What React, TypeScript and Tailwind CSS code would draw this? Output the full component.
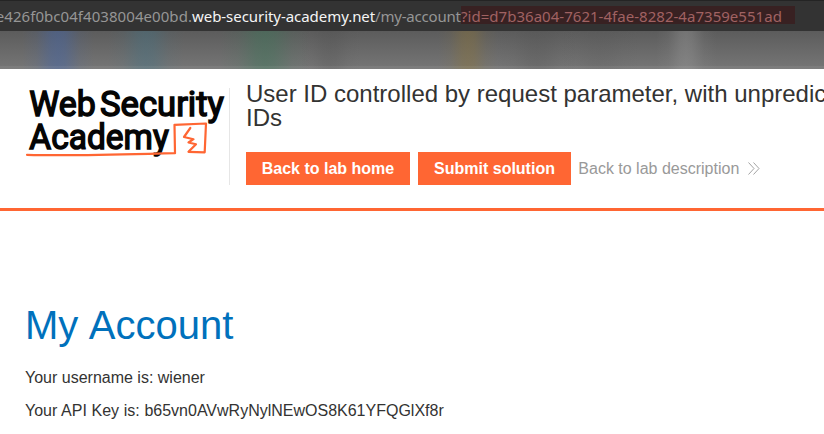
function AddressBar() {
  return (
    <div className="flex h-[31px] w-full items-start border-t border-[#242424] bg-[#333333] pt-[5px] font-['Noto_Sans',sans-serif] text-[15px] leading-[18px] whitespace-nowrap">
      <span className="flex h-5 w-48 shrink-0 justify-end pt-px tracking-[0.06px] text-[#969696]">e426f0bc04f4038004e00bd.</span>
      <span className="h-5 w-[183px] shrink-0 pt-px tracking-[-0.05px] text-[#f5f5f5]">web-security-academy.net</span>
      <span className="h-5 w-[86px] shrink-0 pt-px tracking-[-0.2px] text-[#969696]">/my-account</span>
      <span className="h-[18px] w-[334px] shrink-0 bg-[#382122] pt-px tracking-[0.03px] text-[#a06262]">?id=d7b36a04-7621-4fae-8282-4a7359e551ad</span>
    </div>
  );
}

const glows = [
  { id: "blue", x: 22, width: 72, color: "#4565a4", strength: 0.5 },
  { id: "teal", x: 108, width: 76, color: "#437386", strength: 0.4 },
  { id: "green", x: 220, width: 90, color: "#3d7659", strength: 0.45 },
  { id: "shade-a", x: 300, width: 60, color: "#484848", strength: 0.2 },
  { id: "amber", x: 438, width: 60, color: "#8c743a", strength: 0.42 },
  { id: "shade-b", x: 497, width: 80, color: "#505050", strength: 0.25 },
  { id: "shade-c", x: 560, width: 80, color: "#505050", strength: 0.15 },
  { id: "light", x: 656, width: 60, color: "#999999", strength: 0.4 },
];

function BlurredBookmarks() {
  return (
    <div className="h-[38px] w-full bg-linear-to-b from-[#5c5c5c] to-[#767676]">
      <svg className="block" width="824" height="38" viewBox="0 0 824 38">
        <defs>
          {glows.map((g) => (
            <linearGradient key={g.id} id={g.id}>
              <stop offset="0" stopColor={g.color} stopOpacity="0" />
              <stop offset=".2" stopColor={g.color} stopOpacity={g.strength * 0.25} />
              <stop offset=".4" stopColor={g.color} stopOpacity={g.strength * 0.88} />
              <stop offset=".5" stopColor={g.color} stopOpacity={g.strength} />
              <stop offset=".6" stopColor={g.color} stopOpacity={g.strength * 0.88} />
              <stop offset=".8" stopColor={g.color} stopOpacity={g.strength * 0.25} />
              <stop offset="1" stopColor={g.color} stopOpacity="0" />
            </linearGradient>
          ))}
        </defs>
        {glows.map((g) => (
          <rect key={g.id} x={g.x} width={g.width} height="38" fill={`url(#${g.id})`} />
        ))}
        <rect y="35" width="824" height="3" fill="#fff" opacity=".06" />
      </svg>
    </div>
  );
}

function Logo() {
  return (
    <svg className="block shrink-0" width="204" height="80" viewBox="25 84 204 80" role="img" aria-label="Web Security Academy">
      <g fill="#050505" stroke="#050505" strokeWidth="1.500" fontFamily="Roboto, sans-serif" fontWeight="400" fontSize="35.500">
        <text x="29.300" y="116" textLength="66.500" lengthAdjust="spacingAndGlyphs">Web</text>
        <text x="100" y="116" textLength="124" lengthAdjust="spacingAndGlyphs">Security</text>
        <text x="29.300" y="149" textLength="139.500" lengthAdjust="spacingAndGlyphs">Academy</text>
      </g>
      <g fill="none" stroke="#ff6633" strokeWidth="2.200" strokeLinejoin="round" strokeLinecap="round">
        <path d="M27 154.800 C75 156 125 154.300 175 153.200 L174.500 124.800 L206 123.500 L204.700 152.300 L188.500 151.800" />
        <path d="M190.300 128 L184 137 L193.500 139.200 L188.500 142.500 L196 144.200 L189 151.300" />
      </g>
    </svg>
  );
}

export default function App() {
  return (
    <div className="h-[434px] w-[824px] overflow-hidden bg-white font-['Liberation_Sans',Arial,sans-serif] text-base text-[#333332]">
      <AddressBar />
      <BlurredBookmarks />
      <header className="flex h-[142px] items-start border-b-[3px] border-[#ff6633] pt-[15px] pl-[25px]">
        <Logo />
        <div className="mt-1 h-[97px] w-px shrink-0 bg-[#e6e6e6]" />
        <div className="shrink-0 pl-4">
          <h1 className="-mt-[2px] text-2xl leading-6 whitespace-nowrap">
            <span className="block">User ID controlled by request parameter, with unpredictable user</span>
            <span className="block">IDs</span>
          </h1>
          <div className="mt-[22px] flex h-[33px] items-center gap-2 whitespace-nowrap">
            <button className="h-full w-[164px] bg-[#ff6633] font-bold text-white">Back to lab home</button>
            <button className="h-full w-[153px] bg-[#ff6633] font-bold text-white">Submit solution</button>
            <a className="-ml-[0.7px] flex items-center gap-[9px] text-[#999999]">
              Back to lab description
              <svg width="12" height="13" viewBox="0 0 12 13" fill="none" stroke="#999" strokeWidth=".9">
                <path d="M.5 .5 6 6.500 .5 12.500M5.500 .5 11 6.500 5.500 12.500" />
              </svg>
            </a>
          </div>
        </div>
      </header>
      <main className="pt-[91px] pl-[25px]">
        <h2 className="text-[40px] leading-[46px] [word-spacing:1.6px] text-[#0071bc]">My Account</h2>
        <p className="mt-[21px] leading-[18px]">Your username is: wiener</p>
        <p className="mt-[15px] leading-[18px] [word-spacing:0.2px]">Your API Key is: b65vn0AVwRyNylNEwOS8K61YFQGlXf8r</p>
      </main>
    </div>
  );
}
